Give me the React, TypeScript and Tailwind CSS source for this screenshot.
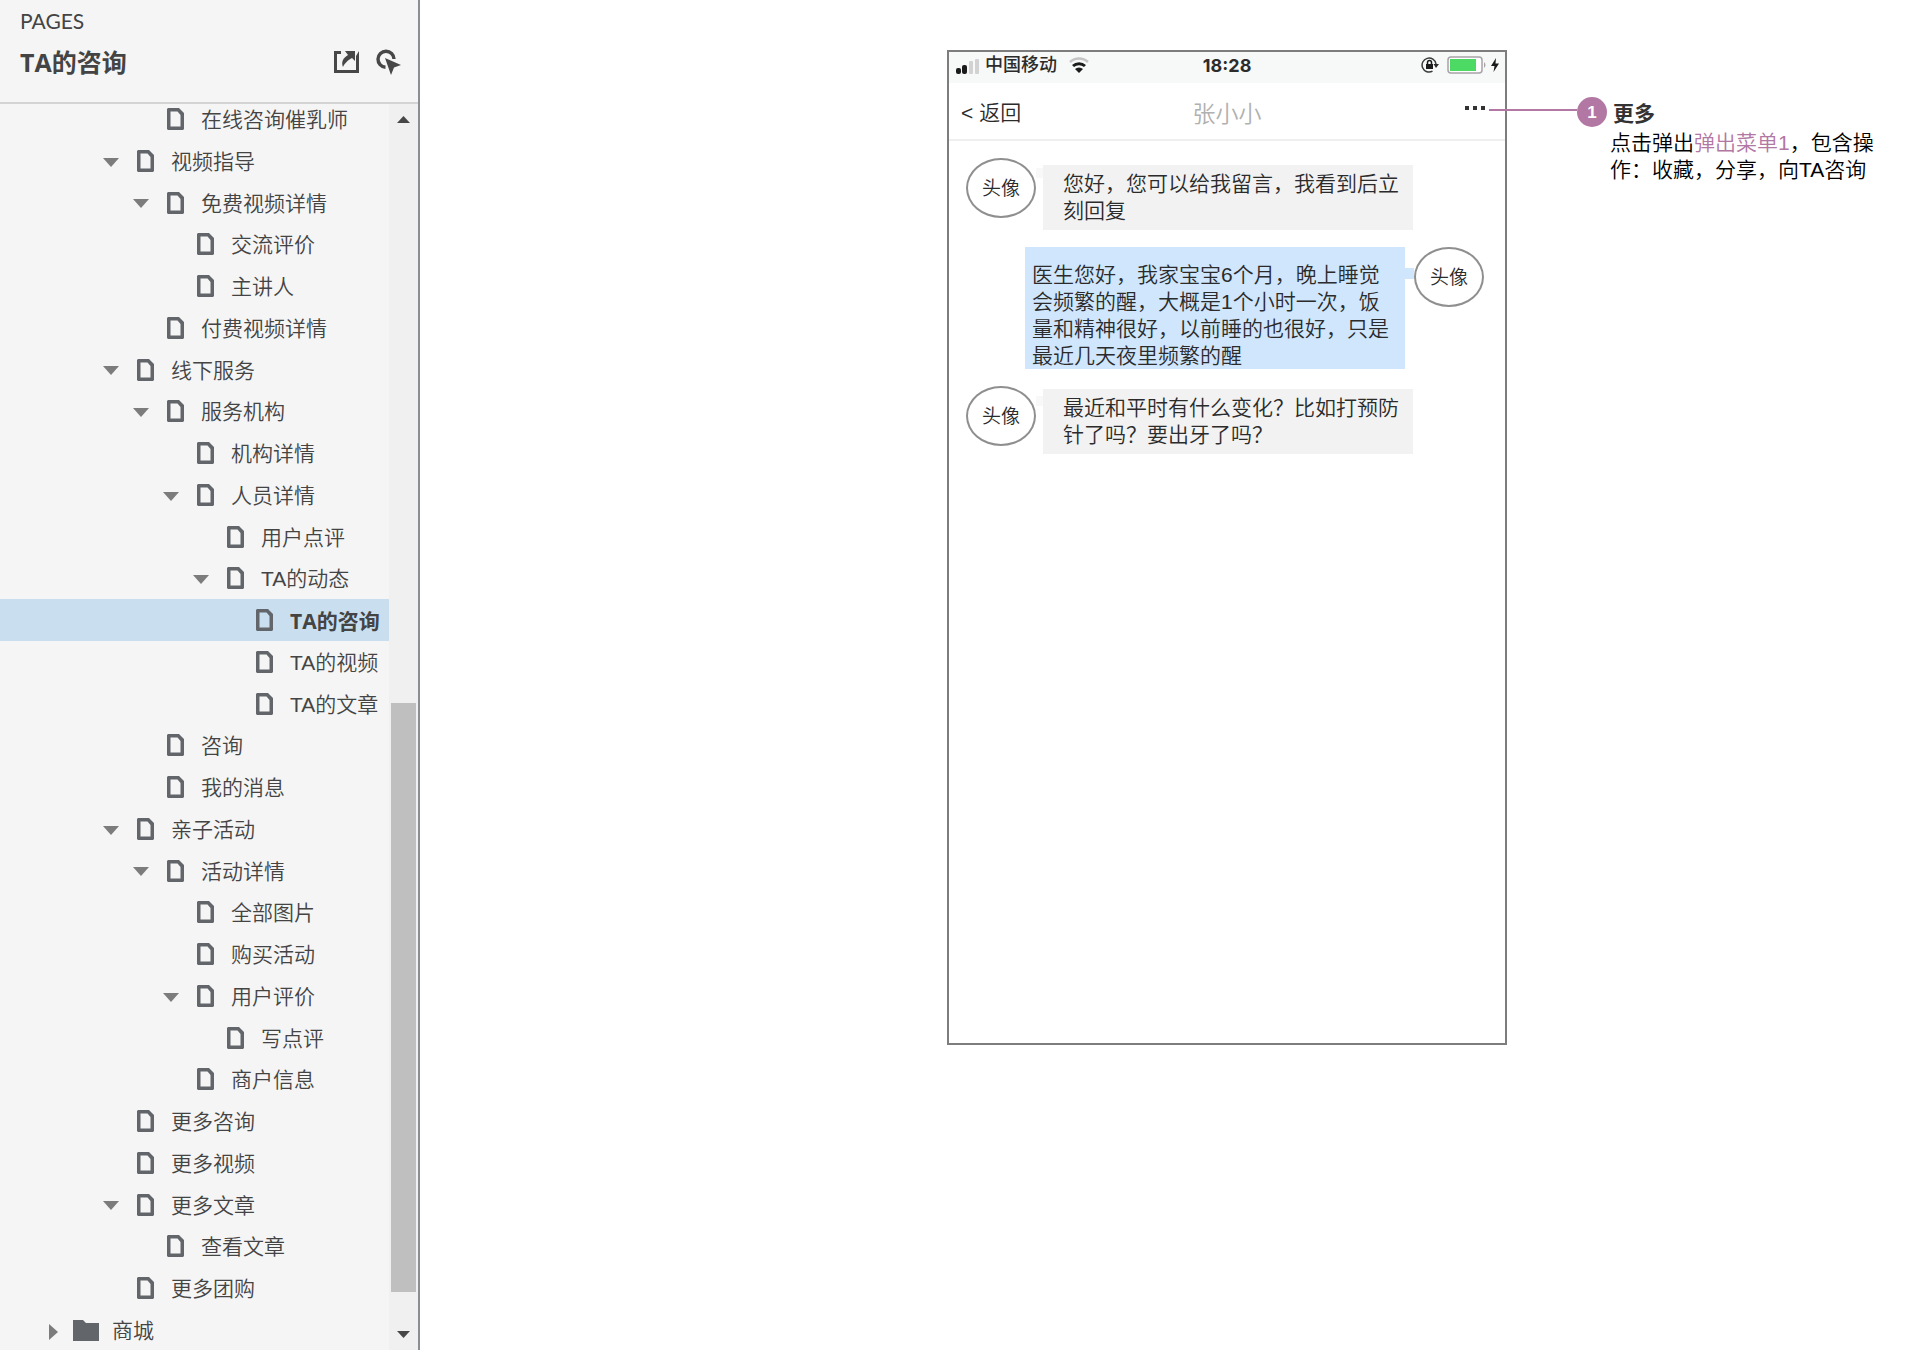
import type { ReactNode } from "react";

type Node = { label: string; level: 0 | 1 | 2 | 3 | 4; open?: boolean; selected?: boolean };

const pages: Node[] = [
  { label: "在线咨询催乳师", level: 1 },
  { label: "视频指导", level: 0, open: true },
  { label: "免费视频详情", level: 1, open: true },
  { label: "交流评价", level: 2 },
  { label: "主讲人", level: 2 },
  { label: "付费视频详情", level: 1 },
  { label: "线下服务", level: 0, open: true },
  { label: "服务机构", level: 1, open: true },
  { label: "机构详情", level: 2 },
  { label: "人员详情", level: 2, open: true },
  { label: "用户点评", level: 3 },
  { label: "TA的动态", level: 3, open: true },
  { label: "TA的咨询", level: 4, selected: true },
  { label: "TA的视频", level: 4 },
  { label: "TA的文章", level: 4 },
  { label: "咨询", level: 1 },
  { label: "我的消息", level: 1 },
  { label: "亲子活动", level: 0, open: true },
  { label: "活动详情", level: 1, open: true },
  { label: "全部图片", level: 2 },
  { label: "购买活动", level: 2 },
  { label: "用户评价", level: 2, open: true },
  { label: "写点评", level: 3 },
  { label: "商户信息", level: 2 },
  { label: "更多咨询", level: 0 },
  { label: "更多视频", level: 0 },
  { label: "更多文章", level: 0, open: true },
  { label: "查看文章", level: 1 },
  { label: "更多团购", level: 0 },
];

const indent = ["pl-[103px]", "pl-[133px]", "pl-[163px]", "pl-[193px]", "pl-[222px]"];

function PageIcon() {
  return (
    <svg className="h-[22px] w-[17px] shrink-0" viewBox="0 0 17 22" aria-hidden="true">
      <path
        fill="#62666b"
        fillRule="evenodd"
        d="M1 0H12L17 5V21L16 22H1L0 21V1ZM3.5 3.5V18.500H13.500V7L10.500 3.500Z"
      />
    </svg>
  );
}

function TreeRow({ node }: { node: Node }) {
  return (
    <li
      className={`flex h-[42px] shrink-0 items-center nth-[4n+3]:h-[41px] ${indent[node.level]} ${
        node.selected ? "bg-[#c9dfef] font-['Open_Sans','Noto_Sans_CJK_SC',sans-serif] font-bold" : ""
      }`}
    >
      {node.open ? (
        <button type="button" aria-label={`折叠 ${node.label}`} className="mr-[18px] w-4 shrink-0">
          <svg className="mt-0.5 h-[9px] w-4" viewBox="0 0 16 9" aria-hidden="true">
            <path fill="#7c7c7c" d="M0 0H16L8 9Z" />
          </svg>
        </button>
      ) : (
        <span className="mr-[18px] w-4 shrink-0" />
      )}
      <a href="#" className="flex items-center gap-[17px] whitespace-nowrap">
        <PageIcon />
        <span className="mt-0.5">{node.label}</span>
      </a>
    </li>
  );
}

function Sidebar() {
  return (
    <aside className="flex h-screen w-[420px] shrink-0 flex-col border-r-2 border-[#8b8e93] bg-[#f5f5f5] text-[#444]">
      <header className="flex h-[104px] shrink-0 flex-col border-b-2 border-[#d4d4d4] pr-4 pl-5">
        <p className="mt-[9px] font-[Lato,sans-serif] text-[21px] leading-6 font-normal">PAGES</p>
        <div className="mt-[11px] flex items-center justify-between">
          <h1 className="font-['Open_Sans','Noto_Sans_CJK_SC',sans-serif] text-[25px] leading-9 font-bold">TA的咨询</h1>
          <div className="flex items-center gap-4">
            <button type="button" aria-label="分享">
              <svg className="h-6 w-[26px]" viewBox="0 0 26 24" aria-hidden="true">
                <path fill="#474747" d="M0 1H7V4H3V20H22V6L25 1V23H0Z" />
                <path fill="#474747" d="M11 1H21V11L18 8C13 11 11 13 9 17C7 12 9 8 14 5Z" />
              </svg>
            </button>
            <button type="button" aria-label="高亮交互元素">
              <svg className="h-[26px] w-[26px]" viewBox="0 0 26 26" aria-hidden="true">
                <path fill="none" stroke="#474747" strokeWidth="3.400" d="M9.500 18.200A8 8 0 1 1 18 10" />
                <path fill="#474747" d="M9 9L25 16L18 18.500L15 26Z" />
              </svg>
            </button>
          </div>
        </div>
      </header>
      <div className="flex min-h-0 flex-1">
        <nav aria-label="页面" className="min-w-0 flex-1 overflow-hidden">
          <ul className="-mt-1.5 flex flex-col text-[21px] leading-7">
            {pages.map((node) => (
              <TreeRow key={node.label} node={node} />
            ))}
            <li className="flex h-[42px] shrink-0 items-center pl-[49px]">
              <button type="button" aria-label="展开 商城" className="mr-[15px]">
                <svg className="mt-1 h-4 w-[9px]" viewBox="0 0 9 16" aria-hidden="true">
                  <path fill="#7c7c7c" d="M0 0V16L9 8Z" />
                </svg>
              </button>
              <a href="#" className="flex items-center gap-[13px]">
                <svg className="h-[21px] w-[26px]" viewBox="0 0 26 21" aria-hidden="true">
                  <path fill="#62666b" d="M0 0H10L13 3H26V21H0Z" />
                </svg>
                <span className="mt-0.5">商城</span>
              </a>
            </li>
          </ul>
        </nav>
        <div className="flex w-[29px] shrink-0 flex-col items-center bg-[#f0f0f0] py-3">
          <svg className="h-[7px] w-[13px] shrink-0" viewBox="0 0 13 7" aria-hidden="true">
            <path fill="#474747" d="M0 7H13L6.500 0Z" />
          </svg>
          <div className="grow-[580]" />
          <div className="w-[25px] grow-[589] bg-[#bfbfbf]" />
          <div className="grow-[39]" />
          <svg className="h-[7px] w-[13px] shrink-0" viewBox="0 0 13 7" aria-hidden="true">
            <path fill="#474747" d="M0 0H13L6.500 7Z" />
          </svg>
        </div>
      </div>
    </aside>
  );
}

function StatusBar() {
  return (
    <div className="grid h-[31px] grid-cols-[1fr_auto_1fr] items-start bg-[#f7f8f8] px-[6px] pt-px text-[18px] leading-6 text-[#2c2c2c]">
      <div className="flex h-6 items-center">
        <svg className="mt-1 h-4 w-[26px]" viewBox="0 0 26 16" aria-hidden="true">
          <rect x="1" y="9" width="5" height="6" rx="2" fill="#1b1b1b" />
          <rect x="7" y="6" width="5" height="9" rx="2" fill="#1b1b1b" />
          <rect x="14" y="2" width="4" height="13" rx="1" fill="#d2d2d2" />
          <rect x="20" y="0" width="4" height="15" rx="1" fill="#d2d2d2" />
        </svg>
        <span className="ml-1 font-medium">中国移动</span>
        <svg className="ml-3 h-4 w-5" viewBox="0 0 20 16" aria-hidden="true">
          <path d="M1 5A13 13 0 0 1 19 5" fill="none" stroke="#c4c4c4" strokeWidth="2.500" />
          <path d="M4 9A9 9 0 0 1 16 9" fill="none" stroke="#1b1b1b" strokeWidth="3" />
          <path d="M10 16L6 12A6 6 0 0 1 14 12Z" fill="#1b1b1b" />
        </svg>
      </div>
      <time className="mt-px font-[Inter,sans-serif] font-bold">18:28</time>
      <div className="flex h-6 items-center justify-end">
        <svg className="h-[18px] w-[18px]" viewBox="0 0 18 18" aria-hidden="true">
          <path d="M11.500 15.200A7 7 0 1 1 15 8" fill="none" stroke="#3a3a3a" strokeWidth="1.500" />
          <path d="M12.500 8H18L15 12Z" fill="#2b2b2b" />
          <rect x="5" y="8" width="7" height="5" fill="#1b1b1b" />
          <path d="M6.500 8V6.500A2 2 0 0 1 10.500 6.500V8" fill="none" stroke="#1b1b1b" strokeWidth="1.500" />
        </svg>
        <svg className="ml-2 h-[18px] w-10" viewBox="0 0 40 18" aria-hidden="true">
          <rect x="1" y="1" width="34" height="16" rx="3" fill="#fff" stroke="#a8a3a8" strokeWidth="1.500" />
          <rect x="3" y="3" width="26" height="12" fill="#4cd964" />
          <path d="M37 6Q40 9 37 12Z" fill="#a8a3a8" />
        </svg>
        <svg className="ml-1 h-[14px] w-2" viewBox="0 0 8 14" aria-hidden="true">
          <path d="M5 0L0 8H3.500L2.500 14L8 5.500H4.500Z" fill="#1b1b1b" />
        </svg>
      </div>
    </div>
  );
}

function Avatar() {
  return (
    <div className="flex h-[60px] w-[70px] shrink-0 items-center justify-center rounded-[50%] border-2 border-[#8f8f8f] bg-white pt-0.5 text-[19px] leading-6">
      头像
    </div>
  );
}

function Reply({ children, offset }: { children: ReactNode; offset: string }) {
  return (
    <div className="flex items-start">
      <Avatar />
      <div className="mt-2.5 h-2.5 w-[7px] bg-[#f8f8f8]" />
      <p className={`w-[370px] bg-[#f2f2f2] pt-[5px] pr-3 pb-1.5 pl-5 ${offset}`}>{children}</p>
    </div>
  );
}

function Phone() {
  return (
    <section aria-label="聊天" className="min-h-[995px] w-[560px] shrink-0 border-2 border-[#7d7d7d] bg-white text-[#2b2b2b]">
      <StatusBar />
      <div className="grid h-[58px] grid-cols-[1fr_auto_1fr] items-start border-b-2 border-[#efefef] px-3">
        <button type="button" className="mt-4 justify-self-start text-[21px] leading-7">
          &lt; 返回
        </button>
        <h2 className="mt-[17px] text-[23px] leading-7 text-[#b0b0b0]">张小小</h2>
        <button type="button" aria-label="更多" className="mt-[23px] mr-2 flex gap-1 justify-self-end">
          <span className="size-1 bg-[#333]" />
          <span className="size-1 bg-[#333]" />
          <span className="size-1 bg-[#333]" />
        </button>
      </div>
      <div className="flex flex-col gap-[17px] px-[17px] pt-[17px] text-[21px] leading-[27px]">
        <Reply offset="mt-[7px]">您好，您可以给我留言，我看到后立刻回复</Reply>
        <div className="flex items-start justify-end pr-1">
          <p className="w-[380px] bg-[#cfe6fd] pt-[14px] pr-3 pl-[7px]">
            医生您好，我家宝宝6个月，晚上睡觉会频繁的醒，大概是1个小时一次，饭量和精神很好，以前睡的也很好，只是最近几天夜里频繁的醒
          </p>
          <div className="mt-[21px] h-[11px] w-[9px] bg-[#cfe6fd]" />
          <Avatar />
        </div>
        <Reply offset="mt-[3px]">最近和平时有什么变化？比如打预防针了吗？要出牙了吗？</Reply>
      </div>
    </section>
  );
}

function Annotation() {
  return (
    <section className="mt-[47px] ml-[70px] min-w-0 text-[21px] leading-[27px] text-black">
      <div className="flex items-center">
        <div className="relative flex size-[30px] items-center justify-center rounded-full bg-[#b277a3] text-[17px] font-bold text-white">
          1
          <span className="absolute top-3 right-full h-0.5 w-[88px] bg-[#b277a3]" />
        </div>
        <h2 className="mt-0.5 ml-1.5 font-bold text-[#333]">更多</h2>
      </div>
      <p className="mt-0.5 ml-[33px] max-w-[270px]">
        点击弹出
        <a href="#" className="text-[#b277a3]">
          弹出菜单1
        </a>
        ，包含操作：收藏，分享，向TA咨询
      </p>
    </section>
  );
}

export default function App() {
  return (
    <div className="flex h-screen bg-white font-['Liberation_Sans','Noto_Sans_CJK_SC',sans-serif] font-[350]">
      <Sidebar />
      <main className="min-w-0 flex-1 overflow-hidden">
        <div className="flex items-start pt-[50px] pl-[35%]">
          <Phone />
          <Annotation />
        </div>
      </main>
    </div>
  );
}
